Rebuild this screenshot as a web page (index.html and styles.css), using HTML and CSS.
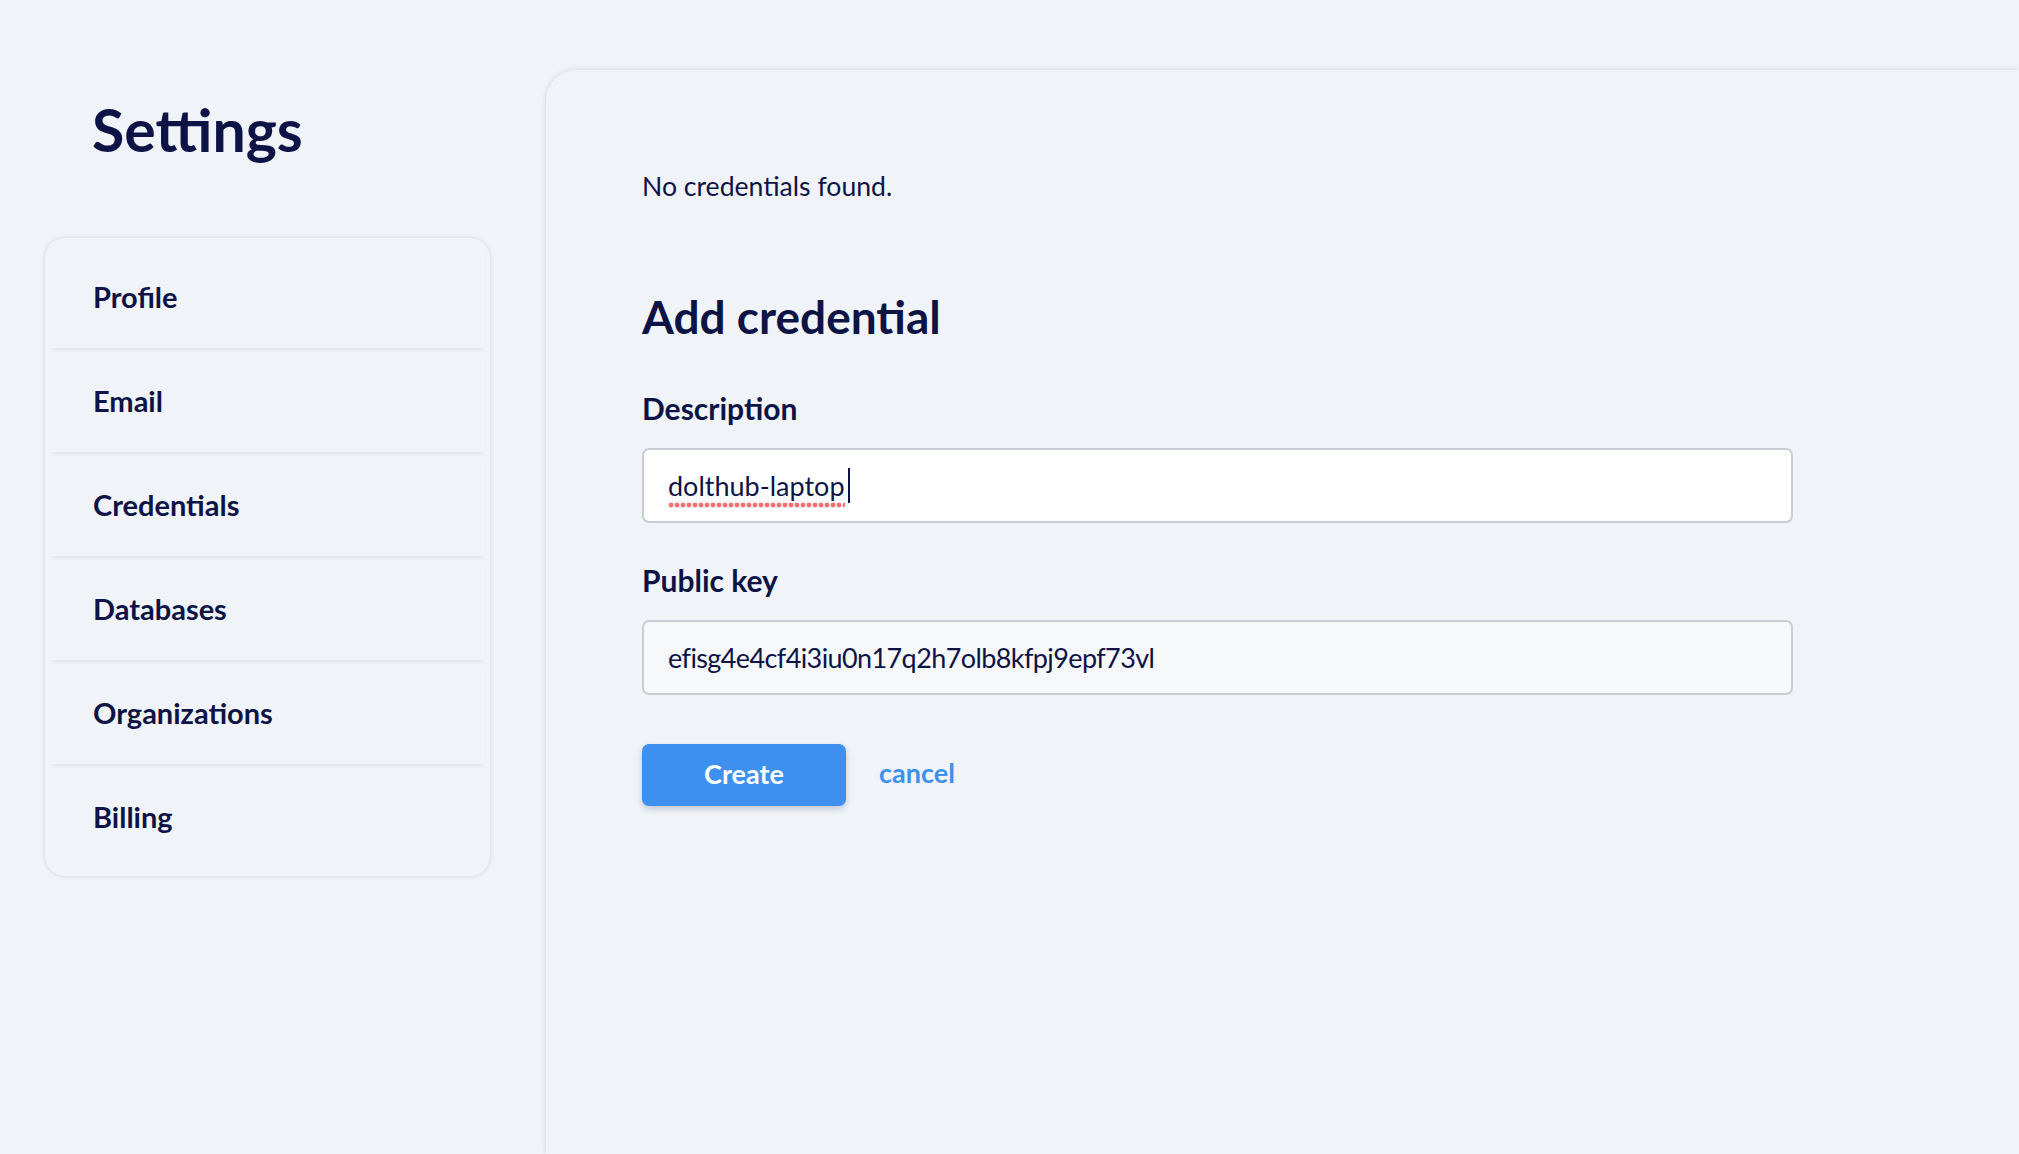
FILE: index.html
```html
<!DOCTYPE html>
<html lang="en">
<head>
  <meta charset="UTF-8" />
  <meta name="viewport" content="width=device-width, initial-scale=1.0"/>
  <title>Settings - Credentials</title>
  <link rel="stylesheet" href="styles.css">
</head>
<body>
  <div class="page">
    <aside class="sidebar">
      <h1>Settings</h1>
      <nav class="menu">
        <a class="menu-item" href="#profile">Profile</a>
        <a class="menu-item" href="#email">Email</a>
        <a class="menu-item" href="#credentials">Credentials</a>
        <a class="menu-item" href="#databases">Databases</a>
        <a class="menu-item" href="#organizations">Organizations</a>
        <a class="menu-item" href="#billing">Billing</a>
      </nav>
    </aside>

    <main class="panel">
      <p class="empty">No credentials found.</p>

      <h2>Add credential</h2>
      <form class="form" onsubmit="return false">
        <label class="label" for="description">Description</label>
        <div id="description" class="field field-active" role="textbox"><span class="typo">dolthub-laptop</span><span class="caret"></span></div>

        <label class="label" for="publickey">Public key</label>
        <div id="publickey" class="field field-readonly" role="textbox">efisg4e4cf4i3iu0n17q2h7olb8kfpj9epf73vl</div>

        <div class="actions">
          <button class="btn" type="submit">Create</button>
          <a class="cancel" href="#">cancel</a>
        </div>
      </form>
    </main>
  </div>
</body>
</html>
```

FILE: styles.css
```css
body {
  font-family: Lato, "Open Sans", sans-serif;
  background: #f0f3f8;
  color: #0d1445;
  margin: 0;
  overflow: hidden;
}
.page {
  display: flex;
  min-height: 100vh;
}
.sidebar {
  width: 445px;
  padding: 96px 0 0 45px;
  flex-shrink: 0;
}
h1 {
  font-size: 59px;
  line-height: 68px;
  font-weight: 700;
  margin: 0 0 74px 47px;
}
.menu {
  display: flex;
  flex-direction: column;
  padding: 6px 6px 8px;
  border-radius: 20px;
  box-shadow: 0 0 4px rgba(30, 40, 70, 0.16);
}
.menu-item {
  display: flex;
  align-items: center;
  height: 104px;
  padding-left: 42px;
  font-size: 29px;
  font-weight: 700;
  color: #0d1445;
  text-decoration: none;
  box-shadow: 0 3px 3px -1px rgba(30, 40, 70, 0.08);
}
.menu-item:last-child {
  box-shadow: none;
}
.panel {
  flex: 1;
  margin: 70px 0 0 56px;
  padding: 100px 0 0 96px;
  border-top-left-radius: 30px;
  box-shadow: 0 0 5px rgba(30, 40, 70, 0.16);
}
.empty {
  font-size: 26.6px;
  line-height: 32px;
  margin: 0;
}
h2 {
  font-size: 46px;
  line-height: 56px;
  font-weight: 700;
  margin: 87px 0 0;
}
.form {
  width: 1151px;
}
.label {
  display: block;
  font-size: 30px;
  line-height: 36px;
  font-weight: 700;
  margin: 45px 0 22px;
}
.field + .label {
  margin-top: 39px;
}
.field {
  display: flex;
  align-items: center;
  box-sizing: border-box;
  height: 75px;
  padding-left: 24px;
  border: 2px solid #c8cdd3;
  border-radius: 7px;
  font-size: 27px;
  line-height: 32px;
}
.field-active {
  background: #fff;
}
.field-readonly {
  background: #f6f8fa;
  letter-spacing: -0.6px;
}
.typo {
  position: relative;
}
.typo::after {
  content: "";
  position: absolute;
  left: 0;
  right: 0;
  bottom: -6px;
  height: 6px;
  background: radial-gradient(circle, #f77272 2.2px, transparent 2.7px) repeat-x;
  background-size: 6px 6px;
}
.caret {
  display: inline-block;
  width: 2px;
  height: 35px;
  margin-left: 3px;
  background: #0d1445;
}
.actions {
  display: flex;
  align-items: center;
  gap: 33px;
  margin-top: 49px;
}
.btn {
  width: 204px;
  height: 62px;
  padding: 0 0 3px;
  border: none;
  border-radius: 7px;
  background: #3e90ef;
  color: #fff;
  font-family: inherit;
  font-size: 27px;
  font-weight: 700;
  cursor: pointer;
  box-shadow: 0 3px 6px rgba(20, 40, 80, 0.22);
}
.btn:hover {
  background: #2f80e0;
}
.cancel {
  color: #3e90ef;
  font-size: 27px;
  font-weight: 700;
  text-decoration: none;
  padding-bottom: 5px;
}
```
